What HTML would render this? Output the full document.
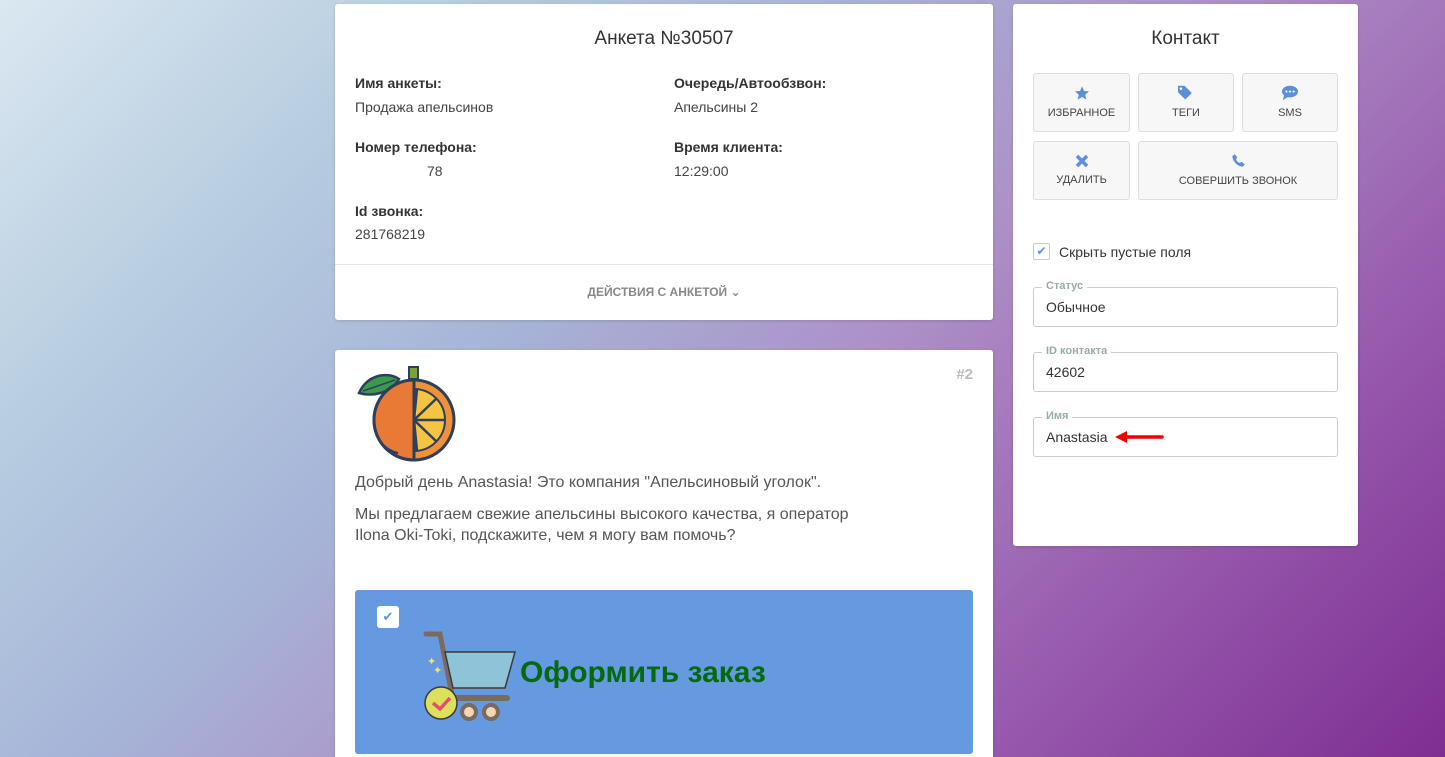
<!DOCTYPE html>
<html><head><meta charset="utf-8"><style>
*{box-sizing:border-box;margin:0;padding:0}
html,body{width:1445px;height:757px;overflow:hidden}
body{font-family:"Liberation Sans","DejaVu Sans",sans-serif;color:#333;position:relative;
background:linear-gradient(135deg,#dbe8f1 0%,#b7cde0 20%,#a6b4d8 38%,#ad8fc6 56%,#9a5fb0 76%,#7e2e92 100%);}
.card{position:absolute;background:#fff;border-radius:3px;box-shadow:0 1px 3px rgba(0,0,0,.15);overflow:hidden}
.lbl{position:absolute;font-size:14px;font-weight:bold;color:#333}
.val{position:absolute;font-size:14px;color:#444}
.btn{position:absolute;background:#f7f7f7;border:1px solid #ddd;border-radius:3px;text-align:center;font-size:11px;color:#444}
.btn svg{display:block;margin:0 auto}
.fld{position:absolute;left:20px;width:305px;height:40px;border:1px solid #ccc;border-radius:3px;font-size:14px;padding:11px 12px;color:#333}
.fld span{position:absolute;top:-8px;left:8px;background:#fff;padding:0 4px;font-size:11px;color:#9aa;font-weight:bold}
</style></head><body>
<div class="card" style="left:335px;top:4px;width:658px;height:316px">
 <div style="position:absolute;top:24px;width:100%;text-align:center;font-size:19px;color:#333">Анкета №30507</div>
 <div class="lbl" style="left:20px;top:71px">Имя анкеты:</div>
 <div class="val" style="left:20px;top:95px">Продажа апельсинов</div>
 <div class="lbl" style="left:339px;top:71px">Очередь/Автообзвон:</div>
 <div class="val" style="left:339px;top:95px">Апельсины 2</div>
 <div class="lbl" style="left:20px;top:135px">Номер телефона:</div>
 <div class="val" style="left:92px;top:159px">78</div>
 <div class="lbl" style="left:339px;top:135px">Время клиента:</div>
 <div class="val" style="left:339px;top:159px">12:29:00</div>
 <div class="lbl" style="left:20px;top:199px">Id звонка:</div>
 <div class="val" style="left:20px;top:222px">281768219</div>
 <div style="position:absolute;left:0;right:0;top:260px;border-top:1px solid #e5e5e5"></div>
 <div style="position:absolute;top:281px;width:100%;text-align:center;font-size:12px;font-weight:bold;color:#888">ДЕЙСТВИЯ С АНКЕТОЙ &#8964;</div>
</div>
<div class="card" style="left:335px;top:350px;width:658px;height:407px;border-radius:3px 3px 0 0">
 <div style="position:absolute;right:20px;top:16px;font-size:15px;font-weight:bold;color:#bbb">#2</div>
 <svg style="position:absolute;left:20px;top:15px" width="102" height="100" viewBox="-2 0 102 100">
  <path d="M2 28 C10 10 30 6 42 14 C34 28 16 32 2 28Z" fill="#3c9a4e" stroke="#2e3f5c" stroke-width="2.5"/>
  <path d="M6 26 L38 15" stroke="#2e3f5c" stroke-width="1.5"/>
  <rect x="52" y="2" width="9" height="12" fill="#7aa33a" stroke="#2e3f5c" stroke-width="2"/>
  <circle cx="57" cy="55" r="40" fill="#f0913a" stroke="#2e3f5c" stroke-width="3"/>
  <circle cx="57" cy="55" r="31" fill="#f7c342" stroke="#2e3f5c" stroke-width="2"/>
  <path d="M57 15 A40 40 0 0 0 57 95Z" fill="#e87a35" stroke="#2e3f5c" stroke-width="3"/>
  <path d="M57 55 L88 55 M57 55 L80 33 M57 55 L80 77 M57 55 L60 24 M57 55 L60 86" stroke="#2e3f5c" stroke-width="2.5"/>
  <path d="M26 80 Q32 86 40 88" stroke="#2e3f5c" stroke-width="2.5" fill="none" stroke-linecap="round"/>
 </svg>
 <div style="position:absolute;left:20px;top:124px;font-size:16px;color:#555">Добрый день Anastasia! Это компания "Апельсиновый уголок".</div>
 <div style="position:absolute;left:20px;top:154px;width:590px;font-size:16px;line-height:21px;color:#555">Мы предлагаем свежие апельсины высокого качества, я оператор<br>Ilona Oki-Toki, подскажите, чем я могу вам помочь?</div>
 <div style="position:absolute;left:20px;top:240px;width:618px;height:164px;background:#6599e0;border-radius:3px">
  <div style="position:absolute;left:22px;top:16px;width:22px;height:22px;background:#fff;border-radius:3px;color:#5b8fd8;font-size:13px;text-align:center;line-height:22px">✔</div>
  <svg style="position:absolute;left:68px;top:40px" width="95" height="95" viewBox="0 0 95 95">
   <path d="M3 4 H17 L30 70" fill="none" stroke="#7b6a60" stroke-width="5" stroke-linecap="round"/>
   <path d="M22 22 H92 L82 58 H30Z" fill="#8ec3d8" stroke="#3a3a3a" stroke-width="1.5"/>
   <path d="M30 68 H84" stroke="#7b6a60" stroke-width="6" stroke-linecap="round"/>
   <circle cx="46" cy="82" r="7" fill="#f4d7b0" stroke="#7b6a60" stroke-width="4"/>
   <circle cx="68" cy="82" r="7" fill="#f4d7b0" stroke="#7b6a60" stroke-width="4"/>
   <circle cx="18" cy="73" r="16" fill="#dde05a" stroke="#3a3a3a" stroke-width="1.5"/>
   <path d="M10 73 L17 79 L27 68" fill="none" stroke="#e0506b" stroke-width="3.5"/>
   <text x="4" y="35" font-size="11" fill="#f5e26a">✦</text><text x="10" y="44" font-size="11" fill="#f5e26a">✦</text>
  </svg>
  <div style="position:absolute;left:165px;top:66px;font-size:30px;font-weight:bold;color:#05690f">Оформить заказ</div>
 </div>
</div>
<div class="card" style="left:1013px;top:4px;width:345px;height:542px">
 <div style="position:absolute;top:24px;width:100%;text-align:center;font-size:19px;color:#333">Контакт</div>
 <div class="btn" style="left:20px;top:69px;width:97px;height:59px;padding-top:11px"><svg width="16" height="16" viewBox="0 0 24 24"><path d="M12 2l3 7 7.5.6-5.7 5 1.8 7.4L12 18l-6.6 4 1.8-7.4L1.5 9.6 9 9z" fill="#5b8fd8"/></svg><div style="margin-top:6px">ИЗБРАННОЕ</div></div>
 <div class="btn" style="left:125px;top:69px;width:96px;height:59px;padding-top:11px"><svg width="18" height="16" viewBox="0 0 24 22"><path d="M1 1h9l10 10-9 9L1 10z" fill="#5b8fd8"/><circle cx="5" cy="5" r="1.8" fill="#fff"/></svg><div style="margin-top:6px">ТЕГИ</div></div>
 <div class="btn" style="left:229px;top:69px;width:96px;height:59px;padding-top:11px"><svg width="18" height="16" viewBox="0 0 24 22"><ellipse cx="12" cy="9" rx="11" ry="8" fill="#5b8fd8"/><path d="M4 14 L2 21 L10 16z" fill="#5b8fd8"/><circle cx="7" cy="9" r="1.5" fill="#fff"/><circle cx="12" cy="9" r="1.5" fill="#fff"/><circle cx="17" cy="9" r="1.5" fill="#fff"/></svg><div style="margin-top:6px">SMS</div></div>
 <div class="btn" style="left:20px;top:137px;width:97px;height:59px;padding-top:12px"><svg width="14" height="14" viewBox="0 0 14 14"><path d="M2 2L12 12M12 2L2 12" stroke="#5b8fd8" stroke-width="3.5"/></svg><div style="margin-top:6px">УДАЛИТЬ</div></div>
 <div class="btn" style="left:125px;top:137px;width:200px;height:59px;padding-top:11px"><svg width="15" height="15" viewBox="0 0 24 24"><path d="M6 2l4 5-2 3c1 3 3 5 6 6l3-2 5 4-3 4C10 21 3 14 2 5z" fill="#5b8fd8"/></svg><div style="margin-top:7px">СОВЕРШИТЬ ЗВОНОК</div></div>
 <div style="position:absolute;left:20px;top:239px;width:17px;height:17px;border:1px solid #ccc;border-radius:2px;color:#5b8fd8;font-size:12px;text-align:center;line-height:15px">✔</div>
 <div style="position:absolute;left:46px;top:240px;font-size:14px;color:#333">Скрыть пустые поля</div>
 <div class="fld" style="top:283px"><span>Статус</span>Обычное</div>
 <div class="fld" style="top:348px"><span>ID контакта</span>42602</div>
 <div class="fld" style="top:413px"><span>Имя</span>Anastasia<svg style="position:absolute;left:80px;top:13px" width="50" height="12" viewBox="0 0 50 12"><path d="M10 6H48" stroke="#e00" stroke-width="3.5" stroke-linecap="round"/><path d="M1 6L13 0V12z" fill="#e00"/></svg></div>
</div>
</body></html>
